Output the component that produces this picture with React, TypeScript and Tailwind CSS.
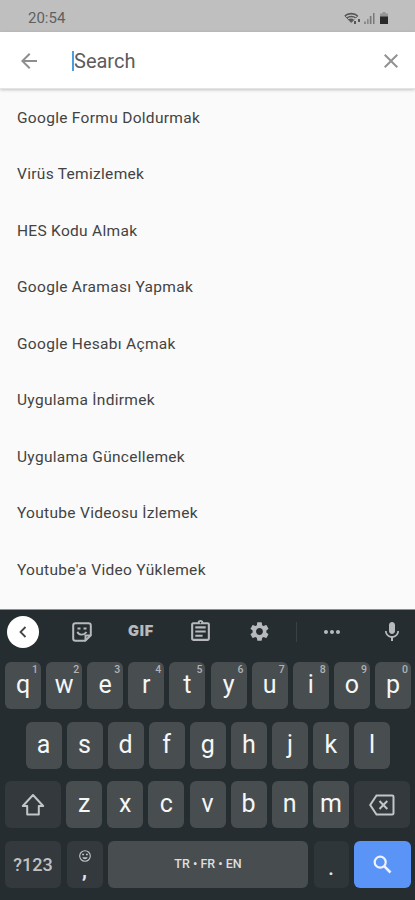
import type { ReactNode } from "react";
import {
  MdArrowBack,
  MdClose,
  MdMic,
  MdMoreHoriz,
  MdOutlineAssignment,
  MdSettings,
} from "react-icons/md";

const SUGGESTIONS = [
  "Google Formu Doldurmak",
  "Virüs Temizlemek",
  "HES Kodu Almak",
  "Google Araması Yapmak",
  "Google Hesabı Açmak",
  "Uygulama İndirmek",
  "Uygulama Güncellemek",
  "Youtube Videosu İzlemek",
  "Youtube'a Video Yüklemek",
];

const TOP_ROW = ["q", "w", "e", "r", "t", "y", "u", "i", "o", "p"];
const HOME_ROW = ["a", "s", "d", "f", "g", "h", "j", "k", "l"];
const BOTTOM_ROW = ["z", "x", "c", "v", "b", "n", "m"];

function StatusIcons() {
  return (
    <div className="flex items-center text-[#555]">
      <svg width="17" height="13" viewBox="0 0 17 13" fill="none" stroke="currentColor">
        <path d="M.8 4C4 .8 10.500 .8 13.700 4" strokeWidth="1.600" />
        <path d="M3 5.800C5.200 4 9.300 4 11.500 5.800" strokeWidth="1.400" />
        <path d="M1 4 7.200 10.500 10.200 7.500M13.700 4l-2.200 2.200" strokeWidth="1" />
        <path d="M4.500 7.300 7.300 10.200 9.800 7.500C8.300 6.300 6 6.300 4.500 7.300Z" fill="currentColor" stroke="none" />
        <path d="M11 9v3M15 7v3" strokeWidth="2" />
      </svg>
      <svg className="ml-[3px]" width="11" height="12" viewBox="0 0 11 12" fill="currentColor">
        <path opacity=".5" d="M0 9.500h2V12H0zM3 7h1.600v5H3z" />
        <path opacity=".65" d="M5.800 4h1.700v8H5.800zM9 1h1.500v11H9z" />
      </svg>
      <svg className="ml-[5px]" width="8" height="12" viewBox="0 0 8 12">
        <path d="M2.500 0h3v1.500H8V5H0V1.500h2.500z" fill="#959595" />
        <path d="M0 4.500h8V12H0z" fill="#2a2a2a" />
      </svg>
    </div>
  );
}

function StickerIcon() {
  return (
    <svg width="20" height="20" viewBox="0 0 20 20" fill="none" stroke="currentColor" strokeWidth="2">
      <path d="M3.500 1.200h13a2.300 2.300 0 0 1 2.300 2.300v9.800l-5.500 5.500H3.500a2.300 2.300 0 0 1-2.300-2.300v-13a2.300 2.300 0 0 1 2.300-2.300Z" />
      <path d="M13.500 18v-4.500H18" />
      <path d="M5.500 9.800c.8 3.400 6.200 4 9 .200" strokeWidth="1.900" />
      <path d="M5.500 6.500h3M11.500 6.500h3" strokeWidth="2.200" />
    </svg>
  );
}

function ShiftIcon() {
  return (
    <svg width="24" height="24" viewBox="0 0 24 24" fill="none" stroke="currentColor" strokeWidth="2">
      <path d="M12 2 1.800 13h4.400v8.500h11.600V13h4.400Z" strokeLinejoin="round" />
    </svg>
  );
}

function BackspaceIcon() {
  return (
    <svg width="26" height="22" viewBox="0 0 26 22" fill="none" stroke="currentColor" strokeWidth="2">
      <path d="M7.500 1.500h15.700a1.300 1.300 0 0 1 1.300 1.300v16.400a1.300 1.300 0 0 1-1.300 1.300H7.500L1.200 11Z" />
      <path d="m10.500 7 7.800 8M18.300 7l-7.800 8" />
    </svg>
  );
}

function SmileyIcon() {
  return (
    <svg width="12" height="12" viewBox="0 0 12 12" fill="none" stroke="currentColor">
      <circle cx="6" cy="6" r="5.300" strokeWidth="1.100" />
      <path d="M3.300 7.200C4.200 9.800 7.800 9.800 8.700 7.200Z" fill="currentColor" stroke="none" />
      <path d="M3.200 4.500h1.800M7 4.500h1.800" strokeWidth="1.300" />
    </svg>
  );
}

function SearchIcon() {
  return (
    <svg width="19" height="19" viewBox="0 0 19 19" fill="none" stroke="currentColor" strokeWidth="2.200">
      <circle cx="7.200" cy="7.200" r="5.500" />
      <path d="m11.200 11.200 6.300 6.300" strokeWidth="2.600" />
    </svg>
  );
}

function LetterKey({ letter, hint }: { letter: string; hint?: string }) {
  return (
    <div className="relative flex h-[47px] w-9 items-center justify-center rounded-md bg-[#484d50] text-[25px] leading-none text-[#f5f6f6]">
      <span className="-mt-0.5">{letter}</span>
      {hint && (
        <span className="absolute top-[3px] right-[3px] text-[10.500px] leading-none font-medium text-[#b0b3b5]">
          {hint}
        </span>
      )}
    </div>
  );
}

function ActionKey({ className, children }: { className: string; children: ReactNode }) {
  return (
    <div className={`flex h-[47px] items-center justify-center rounded-md ${className}`}>
      {children}
    </div>
  );
}

function Keyboard() {
  return (
    <div className="h-[291px] border-t border-[#8b8f91] bg-[#262d31]">
      <div className="flex h-[43px] items-center pl-[7px] text-[#b7babc]">
        <div className="flex h-8 w-8 items-center justify-center rounded-full bg-white text-[#444]">
          <svg width="8" height="12" viewBox="0 0 8 12" fill="none" stroke="currentColor" strokeWidth="1.800">
            <path d="M6.500 1 1.500 6l5 5" />
          </svg>
        </div>
        <div className="ml-[33px] flex w-5 justify-center">
          <StickerIcon />
        </div>
        <span className="ml-9 flex w-[26px] justify-center text-[14.500px] leading-none font-black tracking-[0.8px] [font-family:Inter,sans-serif]">
          GIF
        </span>
        <MdOutlineAssignment className="ml-[34px] size-[25px]" />
        <MdSettings className="ml-[35px] size-[23px]" />
        <div className="ml-[25px] h-5 w-px bg-[#3a4145]" />
        <MdMoreHoriz className="ml-[23px] size-6" />
        <MdMic className="ml-9 size-6" />
      </div>

      <div className="mt-[9px] flex flex-col gap-[12.600px]">
        <div className="flex justify-between pr-[4px] pl-[5px]">
          {TOP_ROW.map((letter, i) => (
            <LetterKey key={letter} letter={letter} hint={String((i + 1) % 10)} />
          ))}
        </div>
        <div className="flex justify-between pr-[25px] pl-[25.500px]">
          {HOME_ROW.map((letter) => (
            <LetterKey key={letter} letter={letter} />
          ))}
        </div>
        <div className="flex justify-between pr-[5px] pl-[5px]">
          <ActionKey className="w-14 bg-[#33393d] text-[#c3c6c7]">
            <ShiftIcon />
          </ActionKey>
          {BOTTOM_ROW.map((letter) => (
            <LetterKey key={letter} letter={letter} />
          ))}
          <ActionKey className="w-14 bg-[#33393d] text-[#c3c6c7]">
            <BackspaceIcon />
          </ActionKey>
        </div>
        <div className="flex justify-between pr-[4px] pl-[5px]">
          <ActionKey className="w-14 bg-[#33393d] text-[18px] font-medium text-[#bfc2c3]">
            ?123
          </ActionKey>
          <ActionKey className="w-9 flex-col bg-[#33393d] text-[#c3c6c7]">
            <SmileyIcon />
            <span className="text-[20px] leading-[16px] font-bold text-[#e4e5e6]">,</span>
          </ActionKey>
          <ActionKey className="w-[200px] bg-[#484d50] text-[12.500px] font-medium text-[#dddedf]">
            TR • FR • EN
          </ActionKey>
          <ActionKey className="w-[35px] bg-[#2f3639] text-[20px] font-medium text-[#e4e5e6]">
            <span className="mt-2">.</span>
          </ActionKey>
          <ActionKey className="w-[57px] bg-[#5b94f7] text-[#eef3fd]">
            <SearchIcon />
          </ActionKey>
        </div>
      </div>
    </div>
  );
}

export default function App() {
  return (
    <div className="flex h-[900px] w-[415px] flex-col overflow-hidden bg-[#fafafa] font-['Roboto',sans-serif]">
      <div className="flex h-8 items-center justify-between bg-[#bfbfbf] pt-[4px] pr-[27px] pl-7">
        <span className="text-[15px] text-[#5f5f5f]">20:54</span>
        <StatusIcons />
      </div>

      <div className="flex h-[57px] items-center border-b border-[#e4e4e4] bg-white pt-[2px] shadow-[0_1px_3px_rgba(0,0,0,0.22)]">
        <MdArrowBack className="ml-[17px] size-6 text-[#8e8e8e]" />
        <div className="ml-[31px] h-5 w-[2px] bg-[#4a9de0]" />
        <span className="text-[20px] text-[#5c5c5c]">Search</span>
        <MdClose className="mr-3 ml-auto size-6 text-[#929292]" />
      </div>

      <ul className="flex-1 pt-px">
        {SUGGESTIONS.map((item) => (
          <li
            key={item}
            className="flex h-[56.500px] items-center pl-[17px] text-[15.500px] tracking-[0.3px] text-[#434343]"
          >
            {item}
          </li>
        ))}
      </ul>

      <Keyboard />
    </div>
  );
}
